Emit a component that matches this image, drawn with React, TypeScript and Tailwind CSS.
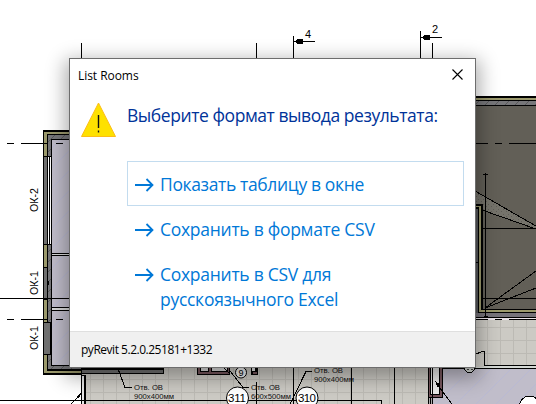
import React from "react";

const planFont = "font-['Liberation_Sans',Arial,sans-serif]";
const uiFont = "font-['Open_Sans','Noto_Sans',sans-serif]";

function FloorPlan() {
  return (
    <svg width="536" height="404" viewBox="0 0 536 404" className={`col-start-1 row-start-1 block ${planFont}`} shapeRendering="crispEdges">
      <defs>
        <pattern id="tile" width="13" height="13" x="90" y="379" patternUnits="userSpaceOnUse">
          <rect width="13" height="13" fill="#cccac4" />
          <path d="M.5 0V13M0 .5H13" stroke="#bcbab4" />
        </pattern>
        <pattern id="corridor" width="13" height="13" x="487" y="327" patternUnits="userSpaceOnUse">
          <rect width="13" height="13" fill="#cccac4" />
          <path d="M.5 0V13M0 .5H13" stroke="#bcbab4" />
        </pattern>
        <pattern id="hatch" width="10" height="10" patternUnits="userSpaceOnUse">
          <rect width="10" height="10" fill="#77777a" />
          <path d="M0 10L10 0" stroke="#505053" strokeWidth=".8" />
        </pattern>
        <pattern id="room" width="20" height="20" patternUnits="userSpaceOnUse">
          <rect width="20" height="20" fill="#c0bdca" />
          <path d="M0 20L20 0" stroke="#b8b8d6" strokeWidth=".8" />
        </pattern>
        <pattern id="stipple" width="5" height="5" patternUnits="userSpaceOnUse">
          <rect width="5" height="5" fill="#75736b" />
          <path d="M1 1.5h1M3 4.5h1" stroke="#5f5c56" />
        </pattern>
      </defs>
      <rect width="536" height="404" fill="#fff" />

      {/* axis markers */}
      <path d="M81.5 43V60M256.5 43V60M293.5 36V60M420.5 31V60M432.5 43V60M293 41.5H315M420 37.5H442" stroke="#000" />
      <path d="M294 41.5L298 39H303V44H298ZM421 37.5L425 35H430V40H425Z" fill="#000" />
      <text x="305" y="38" fontSize="11">4</text>
      <text x="432" y="33" fontSize="11">2</text>

      {/* left wing */}
      <rect x="43" y="130" width="39" height="245" fill="#000" />
      <rect x="45" y="132" width="36" height="2" fill="#9c9a6d" />
      <rect x="44" y="132" width="3" height="241" fill="#9c9a6d" />
      <rect x="45" y="371" width="36" height="2" fill="#9c9a6d" />
      <rect x="48" y="135" width="34" height="234" fill="url(#hatch)" />
      <rect x="51" y="139" width="31" height="227" fill="#000" />
      <rect x="52" y="140" width="30" height="225" fill="url(#room)" />
      <rect x="44" y="156" width="8" height="89" fill="#000" />
      <rect x="44" y="157" width="3" height="87" fill="#707070" />
      <path d="M48.5 157V244M50.5 157V244" stroke="#fff" />
      <rect x="44" y="267" width="4" height="33" fill="#000" />
      <rect x="44" y="268" width="3" height="31" fill="#707070" />
      <rect x="44" y="322" width="7" height="33" fill="#000" />
      <rect x="44" y="323" width="6" height="31" fill="#707070" />
      <path d="M44 244.5H51M52 253.5H70M52 255.5H70M52 307.5H70M52 310.5H70M0 298.5H70M48.5 281V285" stroke="#000" />
      <path d="M52 254.5H70M52 308.5H70M52 309.5H70" stroke="#d8d9d9" />
      <path d="M7 143.5H14M21 143.5H48M56 143.5H63M7 319.5H14M21 319.5H48M56 319.5H63" stroke="#000" />
      <g fontSize="11" fill="#000">
        <text transform="translate(38 212) rotate(-90)" textLength="24" lengthAdjust="spacingAndGlyphs">ОК-2</text>
        <text transform="translate(38 295) rotate(-90)" textLength="24" lengthAdjust="spacingAndGlyphs">ОК-1</text>
        <text transform="translate(38 350) rotate(-90)" textLength="24" lengthAdjust="spacingAndGlyphs">ОК-1</text>
      </g>

      {/* lower floor */}
      <rect x="82" y="366" width="347" height="38" fill="url(#tile)" />
      <rect x="81" y="366" width="83" height="8" fill="#000" />
      <rect x="86" y="367" width="76" height="1" fill="#d8d9d9" />
      <rect x="82" y="370" width="81" height="3" fill="#707070" />
      <rect x="81" y="375" width="5" height="29" fill="#000" />
      <rect x="82" y="376" width="2" height="28" fill="#e8e8e8" />
      <path d="M0 400.5H228M248 400.5H297M318 400.5H381.5V404M71 404L81 394M256.5 382V404M293.5 366V404M351.5 366V404M394.5 366V404" stroke="#000" fill="none" />
      <path d="M76 397L81 393L79 398Z" />
      <path d="M117 366L125 387.5H132M227 367L243 387.5H249M290 404L306 371.5H312" stroke="#000" fill="none" />
      <rect x="197" y="366" width="33" height="9" fill="#000" />
      <rect x="198" y="366" width="31" height="8" fill="#76565d" />
      <rect x="200" y="366" width="9" height="6" fill="#000" />
      <rect x="201" y="366" width="7" height="5" fill="#ddd" />
      <rect x="211" y="366" width="17" height="6" fill="#000" />
      <rect x="212" y="366" width="15" height="5" fill="#ddd" />
      <path d="M222 366L230 374" stroke="#000" />
      <path d="M251 367h7v8h-7Z" />
      <path d="M252 367h3v4h-3Z" fill="#e6e6e6" />
      <path d="M253 372h4v2h-4Z" fill="#76565d" />
      <g stroke="#000" fill="#fff" shapeRendering="auto">
        <circle cx="241" cy="372.5" r="5.5" fill="#f2f2f2" />
        <circle cx="237.5" cy="398" r="11" />
        <circle cx="307" cy="398" r="11" />
      </g>
      <text x="238.5" y="376" fontSize="9">9</text>
      <g fontSize="11.5">
        <text x="228" y="402" textLength="18">311</text>
        <text x="298" y="402" textLength="18">310</text>
      </g>
      <g fontSize="8" fill="#111">
        <text x="134" y="390" textLength="29" lengthAdjust="spacingAndGlyphs">Отв. ОВ</text>
        <text x="134" y="399" textLength="40" lengthAdjust="spacingAndGlyphs">900х400мм</text>
        <text x="251" y="390" textLength="29" lengthAdjust="spacingAndGlyphs">Отв. ОВ</text>
        <text x="251" y="399" textLength="40" lengthAdjust="spacingAndGlyphs">600х500мм</text>
        <text x="314" y="373" textLength="29" lengthAdjust="spacingAndGlyphs">Отв. ОВ</text>
        <text x="314" y="382" textLength="40" lengthAdjust="spacingAndGlyphs">900х400мм</text>
      </g>

      {/* stairwell */}
      <rect x="475" y="96" width="61" height="222" fill="#000" />
      <rect x="475" y="98" width="61" height="2" fill="#9c9a6d" />
      <rect x="475" y="101" width="61" height="4" fill="url(#hatch)" />
      <rect x="475" y="106" width="61" height="203" fill="#625f57" />
      <path d="M475 191L536 226V229L482 210L475 207Z" fill="url(#stipple)" />
      <path d="M475 191L536 226M482 210L536 229M485 308L536 271M485 308L536 288M475 143.5H488M495 143.5H502M509 143.5H536M475 228.5H536M475 298.5H536" stroke="#000" fill="none" />
      <rect x="475" y="204" width="8" height="109" fill="#000" />
      <path d="M475 206.5H480" stroke="#9c9a6d" />
      <rect x="475" y="209" width="3" height="104" fill="#55575a" />
      <path d="M480 206V311H536" stroke="#9c9a6d" strokeWidth="2" fill="none" />
      <rect x="475" y="313" width="61" height="4" fill="#77747b" />
      <path d="M485.5 173V317" stroke="#000" />
      <path d="M483 174h5v1h-5ZM484 316h4v1h-4ZM475 262h3v1h-3Z" />

      {/* corridor and lower right room */}
      <rect x="475" y="318" width="61" height="48" fill="url(#corridor)" />
      <rect x="475" y="318" width="61" height="2" fill="#eae3e9" />
      <path d="M475 319.5H488M495 319.5H502M509 319.5H536" stroke="#000" />
      <rect x="429" y="365" width="107" height="39" fill="url(#room)" />
      <rect x="429" y="365" width="107" height="4" fill="#000" />
      <rect x="475" y="366" width="61" height="2" fill="#d4d8d4" />
      <path d="M475 354.5L481 352L484.5 351.5V366" stroke="#000" fill="none" />
      <rect x="476" y="357" width="8" height="10" fill="#cccac4" />
      <rect x="428" y="367" width="15" height="31" fill="#000" />
      <rect x="429" y="367" width="13" height="30" fill="#76565d" />
      <rect x="430" y="367" width="10" height="28" fill="#000" />
      <rect x="431" y="367" width="8" height="27" fill="#e8e9e8" />
      <rect x="428" y="398" width="5" height="6" fill="#000" />
      <path d="M429.5 398V404M431.5 398V404" stroke="#aaa" />
      <path d="M432.5 367V404M436 383L452 404" stroke="#000" />
      <path d="M435 381L440 384L438 388Z" />
      <circle cx="469.5" cy="367" r="5.5" fill="#d0d4d0" stroke="#000" />
      <path d="M467 369.5h2m2 0h2" stroke="#444" />
      <circle cx="529.5" cy="406" r="10" fill="#fff" stroke="#000" />
    </svg>
  );
}

function Command({ children, focused = false }: { children: React.ReactNode; focused?: boolean }) {
  return (
    <button className={`flex h-[45px] w-[337px] items-start border pl-[7px] pt-[10px] text-left text-[17.5px] leading-[25px] tracking-[-0.28px] text-[#0078d7] ${focused ? "border-[#c3dcef]" : "border-transparent"}`}>
      <svg width="19" height="14" viewBox="0 0 19 14" fill="none" stroke="currentColor" strokeWidth="1.8" className="mt-[6px] shrink-0">
        <path d="M0 7H17.5M11.5 1L17.5 7L11.5 13" />
      </svg>
      <span className="ml-[6px] whitespace-nowrap">{children}</span>
    </button>
  );
}

function Dialog() {
  return (
    <section className={`z-10 col-start-1 row-start-1 ml-[69px] mt-[58px] flex h-[310px] w-[407px] flex-col border border-[#6d6d6d] bg-white shadow-[0_6px_18px_4px_rgba(0,0,0,0.32)] ${uiFont}`}>
      <header className="flex h-[43px] shrink-0 items-start justify-between pl-[8px] pr-[12px]">
        <h1 className="mt-[8px] text-[12px] leading-[18px] tracking-[-0.05px] text-black">List Rooms</h1>
        <svg width="11" height="11" viewBox="0 0 11 11" className="mt-[10px]" stroke="#000" strokeWidth="1.1">
          <path d="M.5 .5L10.5 10.5M10.5 .5L.5 10.5" />
        </svg>
      </header>
      <main className="flex flex-1 items-start pl-[11px]">
        <svg width="36" height="36" viewBox="0 0 36 36" className="shrink-0">
          <path d="M17.5 1L34.5 34.5H.5Z" fill="#fee100" stroke="#fdbd16" />
          <path d="M17.5 13V26M17.5 28.5V30.5" stroke="#111" strokeWidth="1.4" />
        </svg>
        <div className="ml-[10px] flex flex-col">
          <h2 className="h-[59px] whitespace-nowrap pt-[1px] text-[17.5px] leading-[24px] tracking-[-0.44px] text-[#003399]">Выберите формат вывода результата:</h2>
          <Command focused>
            <span className="tracking-[-0.36px]">Показать таблицу в окне</span>
          </Command>
          <Command>Сохранить в формате CSV</Command>
          <Command>Сохранить в CSV для<br />русскоязычного Excel</Command>
        </div>
      </main>
      <footer className="h-[36px] shrink-0 border-t border-[#dfdfdf] bg-[#f0f0f0] pl-[11px] pt-[9px] text-[12px] leading-[18px] tracking-[-0.48px] text-black">pyRevit 5.2.0.25181+1332</footer>
    </section>
  );
}

export default function App() {
  return (
    <div className="grid h-[404px] w-[536px] overflow-hidden bg-white">
      <FloorPlan />
      <Dialog />
    </div>
  );
}
